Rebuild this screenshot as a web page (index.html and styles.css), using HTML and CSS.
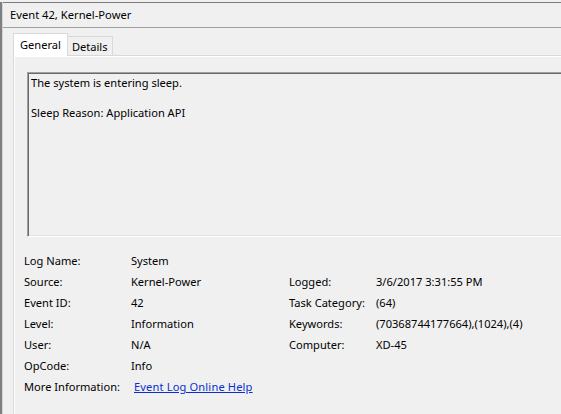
FILE: index.html
```html
<!DOCTYPE html>
<html>
<head>
<meta charset="utf-8">
<link rel="stylesheet" href="styles.css">
</head>
<body>
<div class="window">
  <div class="titlebar">Event 42, Kernel-Power</div>
  <div class="content">
    <div class="tabs">
      <div class="tab active">General</div>
      <div class="tab">Details</div>
    </div>
    <div class="panel">
      <div class="textbox">
        <div class="line">The system is entering sleep.</div>
        <div class="line">&nbsp;</div>
        <div class="line">Sleep Reason: Application API</div>
      </div>
      <div class="props">
        <div class="lbl">Log Name:</div><div class="val">System</div><div></div><div></div>
        <div class="lbl">Source:</div><div class="val">Kernel-Power</div><div class="lbl">Logged:</div><div class="val">3/6/2017 3:31:55 PM</div>
        <div class="lbl">Event ID:</div><div class="val">42</div><div class="lbl">Task Category:</div><div class="val">(64)</div>
        <div class="lbl">Level:</div><div class="val">Information</div><div class="lbl">Keywords:</div><div class="val">(70368744177664),(1024),(4)</div>
        <div class="lbl">User:</div><div class="val">N/A</div><div class="lbl">Computer:</div><div class="val">XD-45</div>
        <div class="lbl">OpCode:</div><div class="val">Info</div><div></div><div></div>
        <div class="lbl">More Information:</div><div class="val"><a class="link" href="#">Event Log Online Help</a></div><div></div><div></div>
      </div>
    </div>
  </div>
</div>
</body>
</html>
```
FILE: styles.css
```css
html, body {
  margin: 0;
  padding: 0;
  width: 561px;
  height: 414px;
  overflow: hidden;
  background: #f0f0f0;
}
body {
  font-family: "Noto Sans", "Open Sans", sans-serif;
  font-size: 11.1px;
  color: #000;
}
.window {
  height: 414px;
  box-sizing: border-box;
  border-left: 2px solid #7f7f7f;
  padding-left: 1px;
  box-shadow: inset 1px 0 0 #d4d4d4;
  background: #f0f0f0;
}
.titlebar {
  box-sizing: border-box;
  height: 26px;
  margin-top: 2px;
  border-top: 1px solid #7a7a7a;
  border-bottom: 1px solid #a0a0a0;
  padding-left: 7px;
  line-height: 23px;
  font-size: 11.2px;
}
.content {
  padding-left: 10px;
  padding-top: 5px;
}
.tabs {
  display: flex;
  align-items: flex-end;
  height: 22px;
  position: relative;
  z-index: 1;
}
.tab {
  box-sizing: border-box;
  height: 19px;
  padding: 0 4px 0 4px;
  line-height: 19px;
  border: 1px solid #d9d9d9;
  border-bottom: none;
  background: #f0f0f0;
  border-left: none;
}
.tab.active {
  height: 23px;
  margin-bottom: -1px;
  padding: 0 6px 0 6px;
  line-height: 21px;
  background: #ffffff;
  border-left: 1px solid #d9d9d9;
}
.panel {
  box-sizing: border-box;
  height: 362px;
  border-top: 1px solid #d9d9d9;
  border-left: 1px solid #d9d9d9;
  box-shadow: inset 1px 1px 0 #ffffff;
  padding-left: 13px;
  padding-top: 16px;
}
.textbox {
  box-sizing: border-box;
  height: 165px;
  margin-right: -20px;
  border-top: 1px solid #a0a0a0;
  border-left: 1px solid #a0a0a0;
  border-bottom: 1px solid #ffffff;
  box-shadow: inset 1px 1px 0 #696969, inset 0 -1px 0 #e3e3e3;
  padding: 2px 0 0 3px;
  line-height: 15px;
}
.props {
  display: grid;
  grid-template-columns: 107px 158px 87px auto;
  grid-auto-rows: 21px;
  line-height: 21px;
  margin-top: 13px;
  margin-left: -3px;
  white-space: nowrap;
}
.link {
  color: #0a2fd0;
  text-decoration: underline;
  margin-left: 3px;
  letter-spacing: 0.15px;
}
```
